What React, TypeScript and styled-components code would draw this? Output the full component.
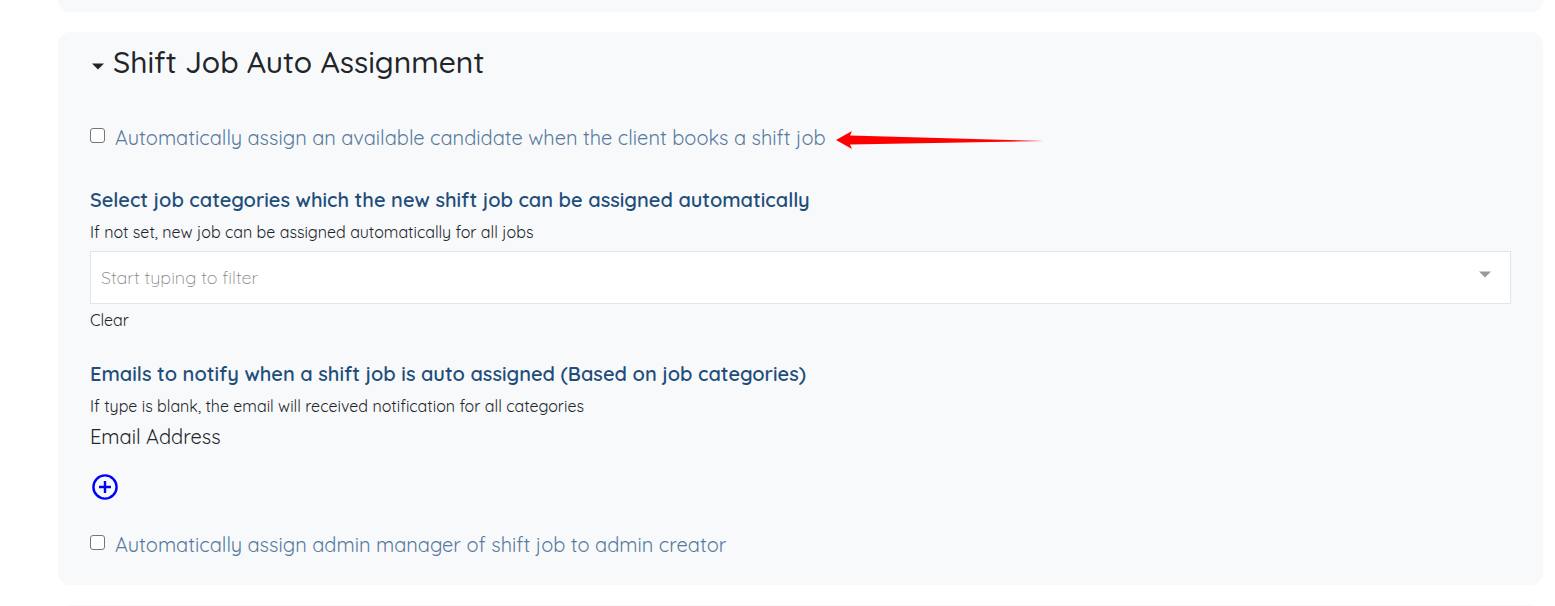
import React from "react";
import styled, { createGlobalStyle } from "styled-components";

const GlobalStyle = createGlobalStyle`
  * { box-sizing: border-box; }
  body {
    margin: 0;
    background: #fff;
    color: #212529;
    font-family: Quicksand, Lato, sans-serif;
    font-size: 20px;
    line-height: 30px;
    overflow-x: hidden;
  }
  button, input { font: inherit; color: inherit; }
`;

const Page = styled.main`
  display: flex;
  flex-direction: column;
  gap: 20px;
  padding: 0 12px 0 58px;
`;

const PreviousCard = styled.div`
  height: 12px;
  border-radius: 0 0 12px 12px;
  background: #f8f9fb;
`;

const NextCard = styled.div`
  height: 24px;
  margin-bottom: -23px;
  border-radius: 12px 12px 0 0;
  background: #f8f9fb;
`;

const Card = styled.section`
  padding: 12px 32px 25px;
  border-radius: 12px;
  background: #f8f9fb;
`;

const Heading = styled.h2`
  margin: 0 0 43px;
  font-size: 30px;
  font-weight: 500;
  line-height: 36px;
`;

const PlainButton = styled.button`
  display: flex;
  align-items: center;
  padding: 0;
  border: 0;
  background: none;
  cursor: pointer;
`;

const HeadingButton = styled(PlainButton)`
  gap: 9px;
  padding-left: 2px;
  svg { margin-top: 8px; }
`;

const ClearButton = styled(PlainButton)`
  margin-top: 4px;
  font-size: 16px;
  line-height: 24px;
`;

const AddButton = styled(PlainButton)`
  margin: 20px 0 28px;
`;

const CheckRow = styled.div`
  display: flex;
  align-items: center;
  color: #56799d;
`;

const Checkbox = styled.input`
  flex: none;
  width: 15px;
  height: 15px;
  margin: 0 10px 6px 0;
  appearance: none;
  border: 1px solid #767676;
  border-radius: 3px;
  background: #fff;
  &:checked { background: #1f4e7a; }
`;

const Arrow = styled.svg`
  flex: none;
  margin: 4px 0 0 10px;
`;

const Field = styled.div<{ $top: number }>`
  margin-top: ${(p) => p.$top}px;
`;

const FieldTitle = styled.label`
  display: block;
  color: #1f4e7a;
  font-weight: 600;
`;

const GroupTitle = styled.h3`
  margin: 0;
  color: #1f4e7a;
  font-size: 20px;
  font-weight: 600;
`;

const Hint = styled.p<{ $bottom: number }>`
  margin: 5px 0 ${(p) => p.$bottom}px;
  font-size: 16px;
  line-height: 24px;
`;

const Combo = styled.div`
  display: flex;
  align-items: center;
  height: 53px;
  padding: 0 19px 0 10px;
  border: 1px solid #e4e5e7;
  background: #fff;
`;

const ComboInput = styled.input`
  flex: 1;
  min-width: 0;
  padding: 0;
  border: 0;
  outline: 0;
  background: none;
  font-size: 18px;
  font-weight: 300;
  line-height: 30px;
  &::placeholder { color: #858585; opacity: 1; }
`;

const ComboToggle = styled(PlainButton)`
  margin-bottom: 6px;
  color: #999;
`;

const Caret = () => (
  <svg width="12" height="7" viewBox="0 0 12 7" aria-hidden="true">
    <path d="M0 0.5H12L6 6.5Z" fill="currentColor" />
  </svg>
);

export default function App() {
  return (
    <>
      <GlobalStyle />
      <Page>
        <PreviousCard />
        <Card>
          <Heading>
            <HeadingButton type="button" aria-expanded="true">
              <Caret />
              Shift Job Auto Assignment
            </HeadingButton>
          </Heading>

          <CheckRow>
            <Checkbox type="checkbox" id="auto-assign" />
            <label htmlFor="auto-assign">
              Automatically assign an available candidate when the client books a shift job
            </label>
            <Arrow width="208" height="18" viewBox="0 0 208 18" aria-hidden="true">
              <path d="M0 9L16 0L14 4.5L208 10L14 13.5L16 18Z" fill="#f00" />
            </Arrow>
          </CheckRow>

          <Field $top={32}>
            <FieldTitle htmlFor="categories">
              Select job categories which the new shift job can be assigned automatically
            </FieldTitle>
            <Hint $bottom={7}>If not set, new job can be assigned automatically for all jobs</Hint>
            <Combo>
              <ComboInput id="categories" type="text" placeholder="Start typing to filter" />
              <ComboToggle type="button" aria-label="Show categories">
                <Caret />
              </ComboToggle>
            </Combo>
            <ClearButton type="button">Clear</ClearButton>
          </Field>

          <Field $top={27}>
            <GroupTitle>
              Emails to notify when a shift job is auto assigned (Based on job categories)
            </GroupTitle>
            <Hint $bottom={4}>
              If type is blank, the email will received notification for all categories
            </Hint>
            <div>Email Address</div>
            <AddButton type="button" aria-label="Add email address">
              <svg width="30" height="30" viewBox="0 0 30 30" fill="none" stroke="#00f" aria-hidden="true">
                <circle cx="15" cy="15" r="11.6" strokeWidth="2.4" />
                <path d="M15 9V21M9 15H21" strokeWidth="2.4" />
              </svg>
            </AddButton>
          </Field>

          <CheckRow>
            <Checkbox type="checkbox" id="admin-manager" />
            <label htmlFor="admin-manager">
              Automatically assign admin manager of shift job to admin creator
            </label>
          </CheckRow>
        </Card>
        <NextCard />
      </Page>
    </>
  );
}
